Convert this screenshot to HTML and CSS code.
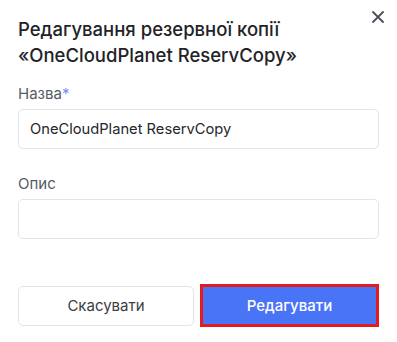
FILE: index.html
```html
<!DOCTYPE html>
<html lang="uk">
<head>
  <meta charset="UTF-8">
  <title>Редагування резервної копії</title>
  <link rel="stylesheet" href="styles.css">
</head>
<body>

  <div class="modal">
    <div class="modal-header">
      <h2>Редагування резервної копії «OneCloudPlanet ReservCopy»</h2>
      <button class="close-btn" aria-label="Закрити">
        <svg width="12" height="12" viewBox="0 0 12 12">
          <path d="M1 1 L11 11 M11 1 L1 11" stroke="#4b4f58" stroke-width="1.8" stroke-linecap="round"/>
        </svg>
      </button>
    </div>

    <div class="field">
      <label for="name">Назва<span class="required">*</span></label>
      <input type="text" id="name" value="OneCloudPlanet ReservCopy">
    </div>

    <div class="field">
      <label for="description">Опис</label>
      <input type="text" id="description">
    </div>

    <div class="actions">
      <button class="btn-cancel">Скасувати</button>
      <button class="btn-submit">Редагувати</button>
    </div>
  </div>

</body>
</html>
```

FILE: styles.css
```css
body {
  font-family: 'Inter', 'Noto Sans', sans-serif;
  margin: 0;
  background-color: white;
}

.modal {
  padding: 16px 18px;
}

.modal-header {
  display: flex;
  align-items: flex-start;
  justify-content: space-between;
}

.modal-header h2 {
  margin: 0;
  font-size: 18.5px;
  line-height: 26px;
  font-weight: 500;
  color: #222327;
}

.close-btn {
  background: none;
  border: none;
  padding: 0;
  width: 12px;
  height: 12px;
  margin: -5px -5px 0 0;
  cursor: pointer;
  display: flex;
}

.field {
  margin-top: 16px;
}

.field + .field {
  margin-top: 25px;
}

.field label {
  display: block;
  font-size: 15px;
  line-height: 20px;
  color: #575b63;
  margin-bottom: 5px;
}

.required {
  color: #6f8ff5;
}

.field input {
  display: block;
  box-sizing: border-box;
  width: 100%;
  height: 40px;
  padding: 0 11px;
  border: 1px solid #e3e4e6;
  border-radius: 5px;
  font-family: inherit;
  font-size: 14.7px;
  color: #26272b;
  outline: none;
}

.actions {
  display: grid;
  grid-template-columns: 176px 179px;
  gap: 6px;
  align-items: center;
  margin-top: 45px;
}

.btn-cancel {
  height: 40px;
  background: white;
  border: 1px solid #e3e4e6;
  border-radius: 5px;
  font-family: inherit;
  font-size: 15px;
  color: #3b3d42;
  cursor: pointer;
}

.btn-submit {
  height: 43px;
  background-color: #4a74f6;
  border: 3px solid #e21b1f;
  font-family: inherit;
  font-size: 15px;
  font-weight: 500;
  color: white;
  cursor: pointer;
}
```
